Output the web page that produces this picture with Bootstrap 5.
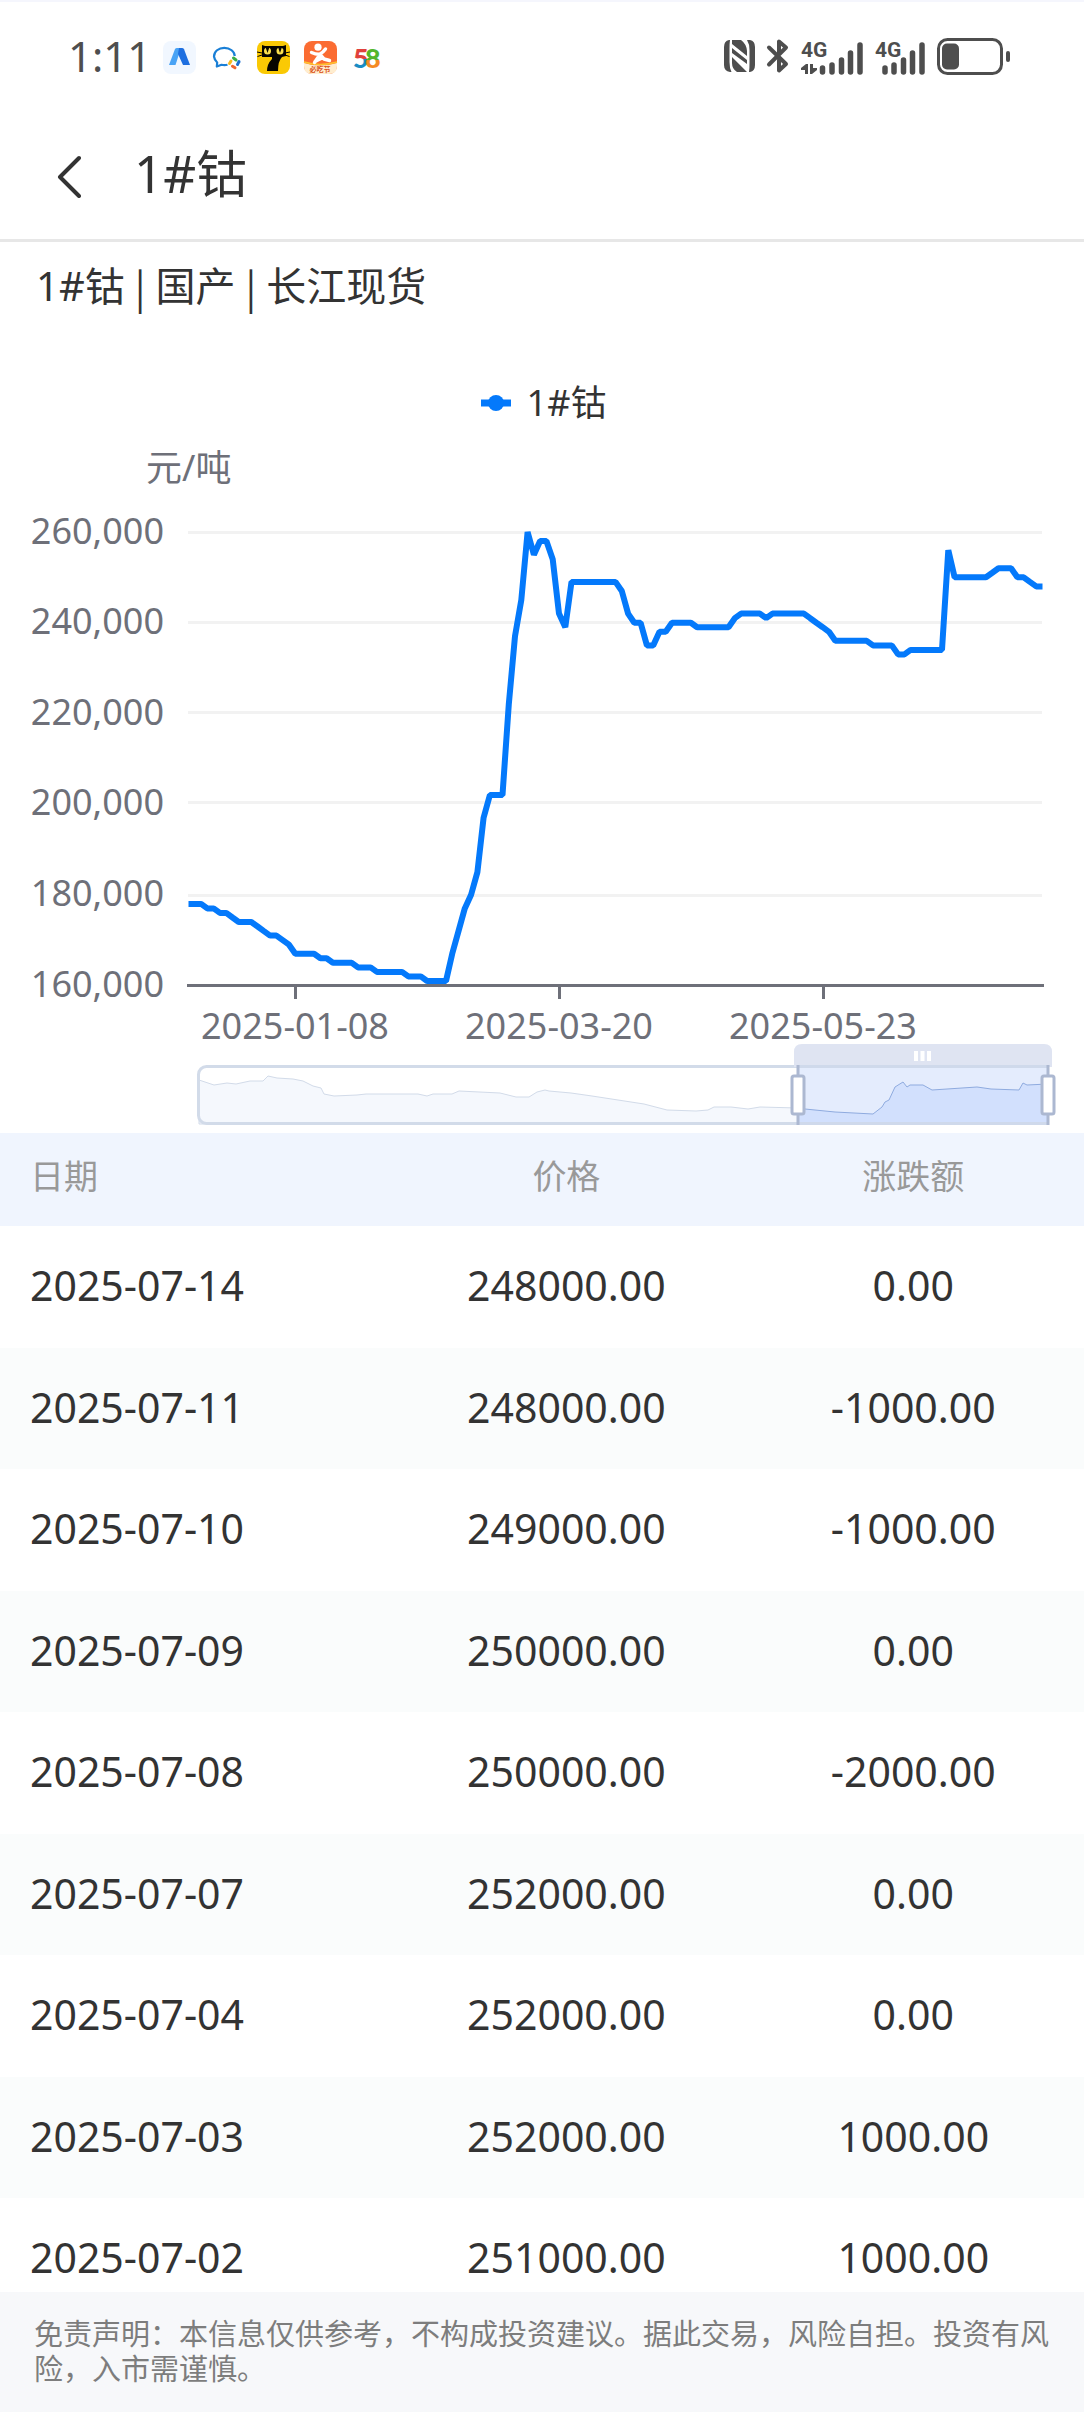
<!DOCTYPE html>
<html lang="zh-CN">
<head>
<meta charset="utf-8">
<meta name="viewport" content="width=device-width, initial-scale=1">
<title>1#钴</title>
<link href="https://cdn.jsdelivr.net/npm/bootstrap@5.3.0/dist/css/bootstrap.min.css" rel="stylesheet">
<style>
  body { font-family: "Noto Sans", "Noto Sans CJK SC", sans-serif; color: #333; background: #fff; }
  .status-bar { height: 112px; padding: 0 74px 0 68px; border-top: 2px solid #f5f6fd; color: #4e4e4e; }
  .status-bar svg { overflow: visible; }
  .clock { font-size: 42px; line-height: 48px; padding-bottom: 2px; }
  .app-icons { gap: 14px; margin-left: 12px; }
  .sys-icons { gap: 12px; padding-bottom: 2px; }
  .title-bar { height: 130px; padding-left: 46px; gap: 42px; border-bottom: 3px solid #e7e7e7; }
  .back-btn { width: 46px; height: 60px; color: #333; }
  .title-bar h1 { font-size: 51px; line-height: 64px; font-weight: 400; padding-bottom: 6px; }
  .spec { height: 88px; padding-left: 36px; gap: 10px; font-size: 40px; line-height: 48px; font-weight: 400; }
  .spec .bar { font-family: "Noto Sans CJK SC", sans-serif; }
  .legend-row { gap: 16px; margin-top: 49px; padding-left: 3px; font-size: 36px; line-height: 48px; }
  .chart text { font-size: 36px; fill: #6e7079; }
  .scroll-area { min-height: 0; scrollbar-width: none; }
  .scroll-area::-webkit-scrollbar { display: none; }
  .prices { table-layout: fixed; }
  .prices th { height: 93px; padding: 0 0 8px; background: #f0f5fe; color: #999; font-size: 34px; line-height: 40px; font-weight: 400; }
  .prices td { height: 122px; padding: 0 0 4px; font-size: 41px; line-height: 48px; }
  .prices tbody tr:nth-child(even) td { height: 121px; background: #fafcfc; }
  .prices th:first-child, .prices td:first-child { width: 36%; padding-left: 30px; text-align: left; }
  .prices th:nth-child(2) { width: 32.5%; }
  .disclaimer { height: 120px; padding: 23px 34px; background: #f7f8fa; color: #7d7d7d; font-family: "Noto Sans CJK SC", sans-serif; font-size: 29px; line-height: 35px; }
</style>
</head>
<body class="vh-100 d-flex flex-column overflow-hidden">

<div class="status-bar d-flex align-items-center flex-shrink-0">
  <span class="clock">1:11</span>
  <div class="app-icons d-flex align-items-center me-auto">
    <svg width="33" height="33" viewBox="0 0 33 33" aria-hidden="true">
      <rect width="33" height="33" rx="8" fill="#f1f7ff"/>
      <path d="M6 24 12 8q.6-1 2-1h4l-5.500 17z" fill="#49a3f5"/>
      <path d="M16 7h3q1.500 0 2 1.200L27 24h-7l-5-11z" fill="#1e6fe0"/>
    </svg>
    <svg width="33" height="33" viewBox="0 0 33 33" aria-hidden="true">
      <path d="M17.500 23.800q-3 .8-6 0L6.800 25.500l.4-4A9.600 9.600 0 0 1 4 15.500C4 10.500 8.600 6.800 14.300 6.800S24.700 10.600 24.700 15" fill="none" stroke="#1a7fd6" stroke-width="2.200" stroke-linejoin="round"/>
      <path d="M23.500 17l2.500 2" stroke="#3cae46" stroke-width="3" stroke-linecap="round"/>
      <path d="M29 20.500l-1.500 3" stroke="#1a6fd0" stroke-width="3" stroke-linecap="round"/>
      <path d="M25 26.800l-2.500-1.500" stroke="#f0642e" stroke-width="3" stroke-linecap="round"/>
      <path d="M19.500 22.500l1.500-2.500" stroke="#f8b91c" stroke-width="3" stroke-linecap="round"/>
    </svg>
    <svg width="33" height="33" viewBox="0 0 33 33" aria-hidden="true">
      <rect width="33" height="33" rx="8" fill="#fac904"/>
      <path d="M5 4l3 1h18l3-1v11l-4 1q-4 4-4 14H10q0-7 5-12v-2H5z" fill="#070600"/>
      <path d="M5 12 0 11M5 14l-4.500 1.500M28 12l5-1M28 14l4.500 1.500" stroke="#070600"/>
      <ellipse cx="10.500" cy="10" rx="3.500" ry="3.500" fill="#fbe04d"/>
      <ellipse cx="23" cy="10" rx="3.500" ry="3.500" fill="#fbe04d"/>
      <path d="M8.500 6h4l-2 6zM21 6h4l-2 6z" fill="#070600"/>
    </svg>
    <svg width="33" height="33" viewBox="0 0 33 33" aria-hidden="true">
      <rect width="33" height="33" rx="8" fill="#fb6c32"/>
      <path d="M0 22q16 5 33 0v3q0 8-8 8H8q-8 0-8-8z" fill="#ffedcf"/>
      <path d="M0 21q16 5 33 0" fill="none" stroke="#ffc22e" stroke-width="1.500"/>
      <circle cx="14" cy="6.200" r="3.600" fill="#fff"/>
      <path d="M7.500 11.500q6 2.500 8.500 1.500 3-1.500 5.500-5M10.500 21.500l5.500-8 4 4.500 5.500 1.500M11 20.500l6-3" fill="none" stroke="#fff" stroke-width="3.400" stroke-linecap="round" stroke-linejoin="round"/>
      <text x="16" y="31" text-anchor="middle" font-size="7" font-weight="700" fill="#d9541c">必吃节</text>
    </svg>
    <svg width="33" height="33" viewBox="0 0 33 33" aria-hidden="true">
      <defs>
        <linearGradient id="five" x2="0" y2="1"><stop offset=".56" stop-color="#e0413c"/><stop offset=".56" stop-color="#1b8cc4"/></linearGradient>
        <linearGradient id="eight" x2="0" y2="1"><stop offset=".58" stop-color="#52b52c"/><stop offset=".58" stop-color="#f58a24"/></linearGradient>
      </defs>
      <g font-family="Lato, sans-serif" font-size="27" font-weight="900">
        <text x="2" y="27" fill="url(#five)">5</text>
        <text x="14" y="27" fill="url(#eight)">8</text>
      </g>
    </svg>
  </div>
  <div class="sys-icons d-flex align-items-center">
    <svg width="31" height="32" viewBox="0 0 31 32" fill="currentColor" aria-hidden="true">
      <path d="M6 0H5Q0 1 0 7v18q0 6 6 7h1.500Q5.500 28 5.500 22V9Q5.500 3 6 0z"/>
      <path d="M25 32h1q5-1 5-7V7q0-6-5-7h-3q2.500 4 2.500 10v13q0 6-.5 9z"/>
      <path d="M8 0h9q5.500 4 6 11v5L8 4zM8 8l15 12v4L8 13zM8 17l15 15H13q-5-3-5-9z"/>
    </svg>
    <svg width="22" height="34" viewBox="0 0 22 34" fill="none" stroke="currentColor" stroke-width="4" stroke-linecap="round" stroke-linejoin="round" aria-hidden="true">
      <path d="M2 8.500 19 25l-7 6.500V21M2 25.500 19 8.500 12 2.500v11"/>
    </svg>
    <svg width="62" height="40" viewBox="0 -4 62 40" fill="currentColor" aria-hidden="true">
      <text x="0" y="17" font-family="Roboto, sans-serif" font-size="21" font-weight="700">4G</text>
      <g stroke="currentColor" stroke-width="5.500" stroke-linecap="round"><path d="M21.500 28v4M31 25v7M40.500 20v12M49.500 13v19M59 5v27"/></g>
      <path d="M4 24v10h3V24H5l-5 4v2h4zM9 24v10h2l5-4v-2h-4v-4z"/>
    </svg>
    <svg width="50" height="40" viewBox="0 -4 50 40" fill="currentColor" aria-hidden="true">
      <text x="0" y="17" font-family="Roboto, sans-serif" font-size="21" font-weight="700">4G</text>
      <g stroke="currentColor" stroke-width="5.500" stroke-linecap="round"><path d="M10 28v4M19 25v7M28.500 20v12M37.500 13v19M47 5v27"/></g>
    </svg>
    <svg width="73" height="37" viewBox="0 0 73 37" aria-hidden="true">
      <rect x="1.500" y="1.500" width="63" height="34" rx="9" fill="none" stroke="currentColor" stroke-width="3"/>
      <rect x="5" y="5.500" width="17" height="26" rx="5" fill="currentColor"/>
      <rect x="69" y="13" width="4" height="11" rx="2" fill="currentColor"/>
    </svg>
  </div>
</div>

<header class="title-bar d-flex align-items-center flex-shrink-0">
  <button type="button" class="back-btn btn p-0 border-0 d-flex align-items-center justify-content-center" aria-label="返回">
    <svg width="24" height="44" viewBox="0 0 24 44" fill="none" stroke="currentColor" stroke-width="4" stroke-linecap="round" stroke-linejoin="round" aria-hidden="true"><path d="M22 4 3 23l19 19"/></svg>
  </button>
  <h1 class="m-0">1#钴</h1>
</header>

<main class="scroll-area flex-grow-1 overflow-auto">
  <h2 class="spec d-flex align-items-center m-0"><span>1#钴</span><span class="bar">|</span><span>国产</span><span class="bar">|</span><span>长江现货</span></h2>

  <div class="legend-row d-flex align-items-center justify-content-center">
    <svg width="30" height="20" viewBox="0 0 30 20" aria-hidden="true"><path d="M0 10h30" stroke="#0479fb" stroke-width="7"/><circle cx="15" cy="10" r="8" fill="#0479fb"/></svg>
    <span>1#钴</span>
  </div>

  <svg class="chart d-block w-100" viewBox="0 427 1084 706" role="img" aria-label="1#钴 价格走势">
    <text x="146" y="481">元/吨</text>
    <g stroke="#f2f2f2" stroke-width="3">
      <path d="M188 532.500H1042M188 622.500H1042M188 712.500H1042M188 802.500H1042M188 895.500H1042"/>
    </g>
    <g text-anchor="end">
      <text x="164" y="544">260,000</text>
      <text x="164" y="634">240,000</text>
      <text x="164" y="725">220,000</text>
      <text x="164" y="815">200,000</text>
      <text x="164" y="906">180,000</text>
      <text x="164" y="997">160,000</text>
    </g>
    <path d="M187 985.500H1044M295.500 985.500V999M559.500 985.500V999M823.500 985.500V999" fill="none" stroke="#6e7079" stroke-width="3"/>
    <g text-anchor="middle">
      <text x="295" y="1039">2025-01-08</text>
      <text x="559" y="1039">2025-03-20</text>
      <text x="823" y="1039">2025-05-23</text>
    </g>
    <polyline id="priceLine" fill="none" stroke="#0479fb" stroke-width="6" stroke-linejoin="bevel"/>

    <!-- range slider under the plot -->
    <path d="M199 1080 214 1085 227 1083 236 1084 250 1081 263 1081 268 1076 277 1078 293 1079 303 1081 313 1086 321 1088 324 1094 334 1096 357 1095 366 1094 418 1094 427 1096 433 1094 452 1094 459 1091 500 1093 516 1097 529 1097 537 1092 545 1090 549 1091 571 1093 592 1096 644 1104 667 1110 696 1111 708 1110 714 1107 731 1107 748 1109 760 1107 798 1108V1124H199z" fill="#f5f8fd" stroke="#d2dbe9" stroke-width="1"/>
    <rect x="198.500" y="1066.500" width="849" height="57" rx="8" fill="none" stroke="#d2dbe9" stroke-width="3"/>
    <path d="M794 1067v-15q0-8 8-8h242q8 0 8 8v15z" fill="#dfe4f2"/>
    <path d="M798 1068H1048V1125H798z" fill="#e4ecfd"/>
    <path d="M798 1108 805 1109 835 1112 873 1114 882 1107 885 1102 889 1100 895 1087 903 1082 907 1087 910 1085 923 1085 932 1090 977 1087 991 1089 1019 1090 1023 1083 1027 1085 1048 1084V1125H798z" fill="#d2e0fd"/>
    <path d="M798 1108 805 1109 835 1112 873 1114 882 1107 885 1102 889 1100 895 1087 903 1082 907 1087 910 1085 923 1085 932 1090 977 1087 991 1089 1019 1090 1023 1083 1027 1085 1048 1084" fill="none" stroke="#8fabdf" stroke-width="1"/>
    <path d="M798 1066.500H1048M798 1123.500H1048" stroke="#cfd9eb" stroke-width="3"/>
    <path d="M916 1051v10M922.500 1051v10M929 1051v10" stroke="#fff" stroke-width="4"/>
    <path d="M798 1065v60M1048 1065v60" stroke="#acb8d1" stroke-width="3"/>
    <g fill="#fff" stroke="#acb8d1" stroke-width="3"><rect x="792" y="1076" width="12" height="38" rx="2"/><rect x="1042" y="1076" width="12" height="38" rx="2"/></g>
  </svg>

  <table class="prices w-100 text-center">
    <thead><tr><th scope="col">日期</th><th scope="col">价格</th><th scope="col">涨跌额</th></tr></thead>
    <tbody>
      <tr><td>2025-07-14</td><td>248000.00</td><td>0.00</td></tr>
      <tr><td>2025-07-11</td><td>248000.00</td><td>-1000.00</td></tr>
      <tr><td>2025-07-10</td><td>249000.00</td><td>-1000.00</td></tr>
      <tr><td>2025-07-09</td><td>250000.00</td><td>0.00</td></tr>
      <tr><td>2025-07-08</td><td>250000.00</td><td>-2000.00</td></tr>
      <tr><td>2025-07-07</td><td>252000.00</td><td>0.00</td></tr>
      <tr><td>2025-07-04</td><td>252000.00</td><td>0.00</td></tr>
      <tr><td>2025-07-03</td><td>252000.00</td><td>1000.00</td></tr>
      <tr><td>2025-07-02</td><td>251000.00</td><td>1000.00</td></tr>
    </tbody>
  </table>
</main>

<footer class="disclaimer flex-shrink-0">免责声明：本信息仅供参考，不构成投资建议。据此交易，风险自担。投资有风险，入市需谨慎。</footer>

<script src="https://cdn.jsdelivr.net/npm/bootstrap@5.3.0/dist/js/bootstrap.bundle.min.js"></script>
<script>
  // Price in thousands of yuan per tonne, as [value, number of trading days it held].
  const runs = [[178,3],[177,2],[176,2],[175,1],[174,3],[173,1],[172,1],[171,2],[170,1],[169,1],[167,4],[166,2],[165,4],[164,3],[163,5],[162,3],[161,4],
    [167,1],[172,1],[177,1],[180,1],[185,1],[197,1],[202,3],[222,1],[237,1],[245,1],[260,1],[255,1],[258,2],[254,1],[242,1],[239,1],[249,8],[247,1],[242,1],
    [240,2],[235,2],[238,2],[240,4],[239,6],[241,1],[242,4],[241,1],[242,6],[241,1],[240,1],[239,1],[238,1],[236,6],[235,4],[233,2],[234,6],[256,1],
    [250,6],[251,1],[252,3],[250,2],[249,1],[248,2]];
  const prices = runs.flatMap(([v, n]) => Array(n).fill(v));
  const left = 188.5, right = 1042.5, base = 985.5, perUnit = 4.535;
  const step = (right - left) / (prices.length - 1);
  document.getElementById('priceLine').setAttribute('points',
    prices.map((v, i) => (left + i * step).toFixed(1) + ',' + (base - (v - 160) * perUnit).toFixed(1)).join(' '));
</script>
</body>
</html>
